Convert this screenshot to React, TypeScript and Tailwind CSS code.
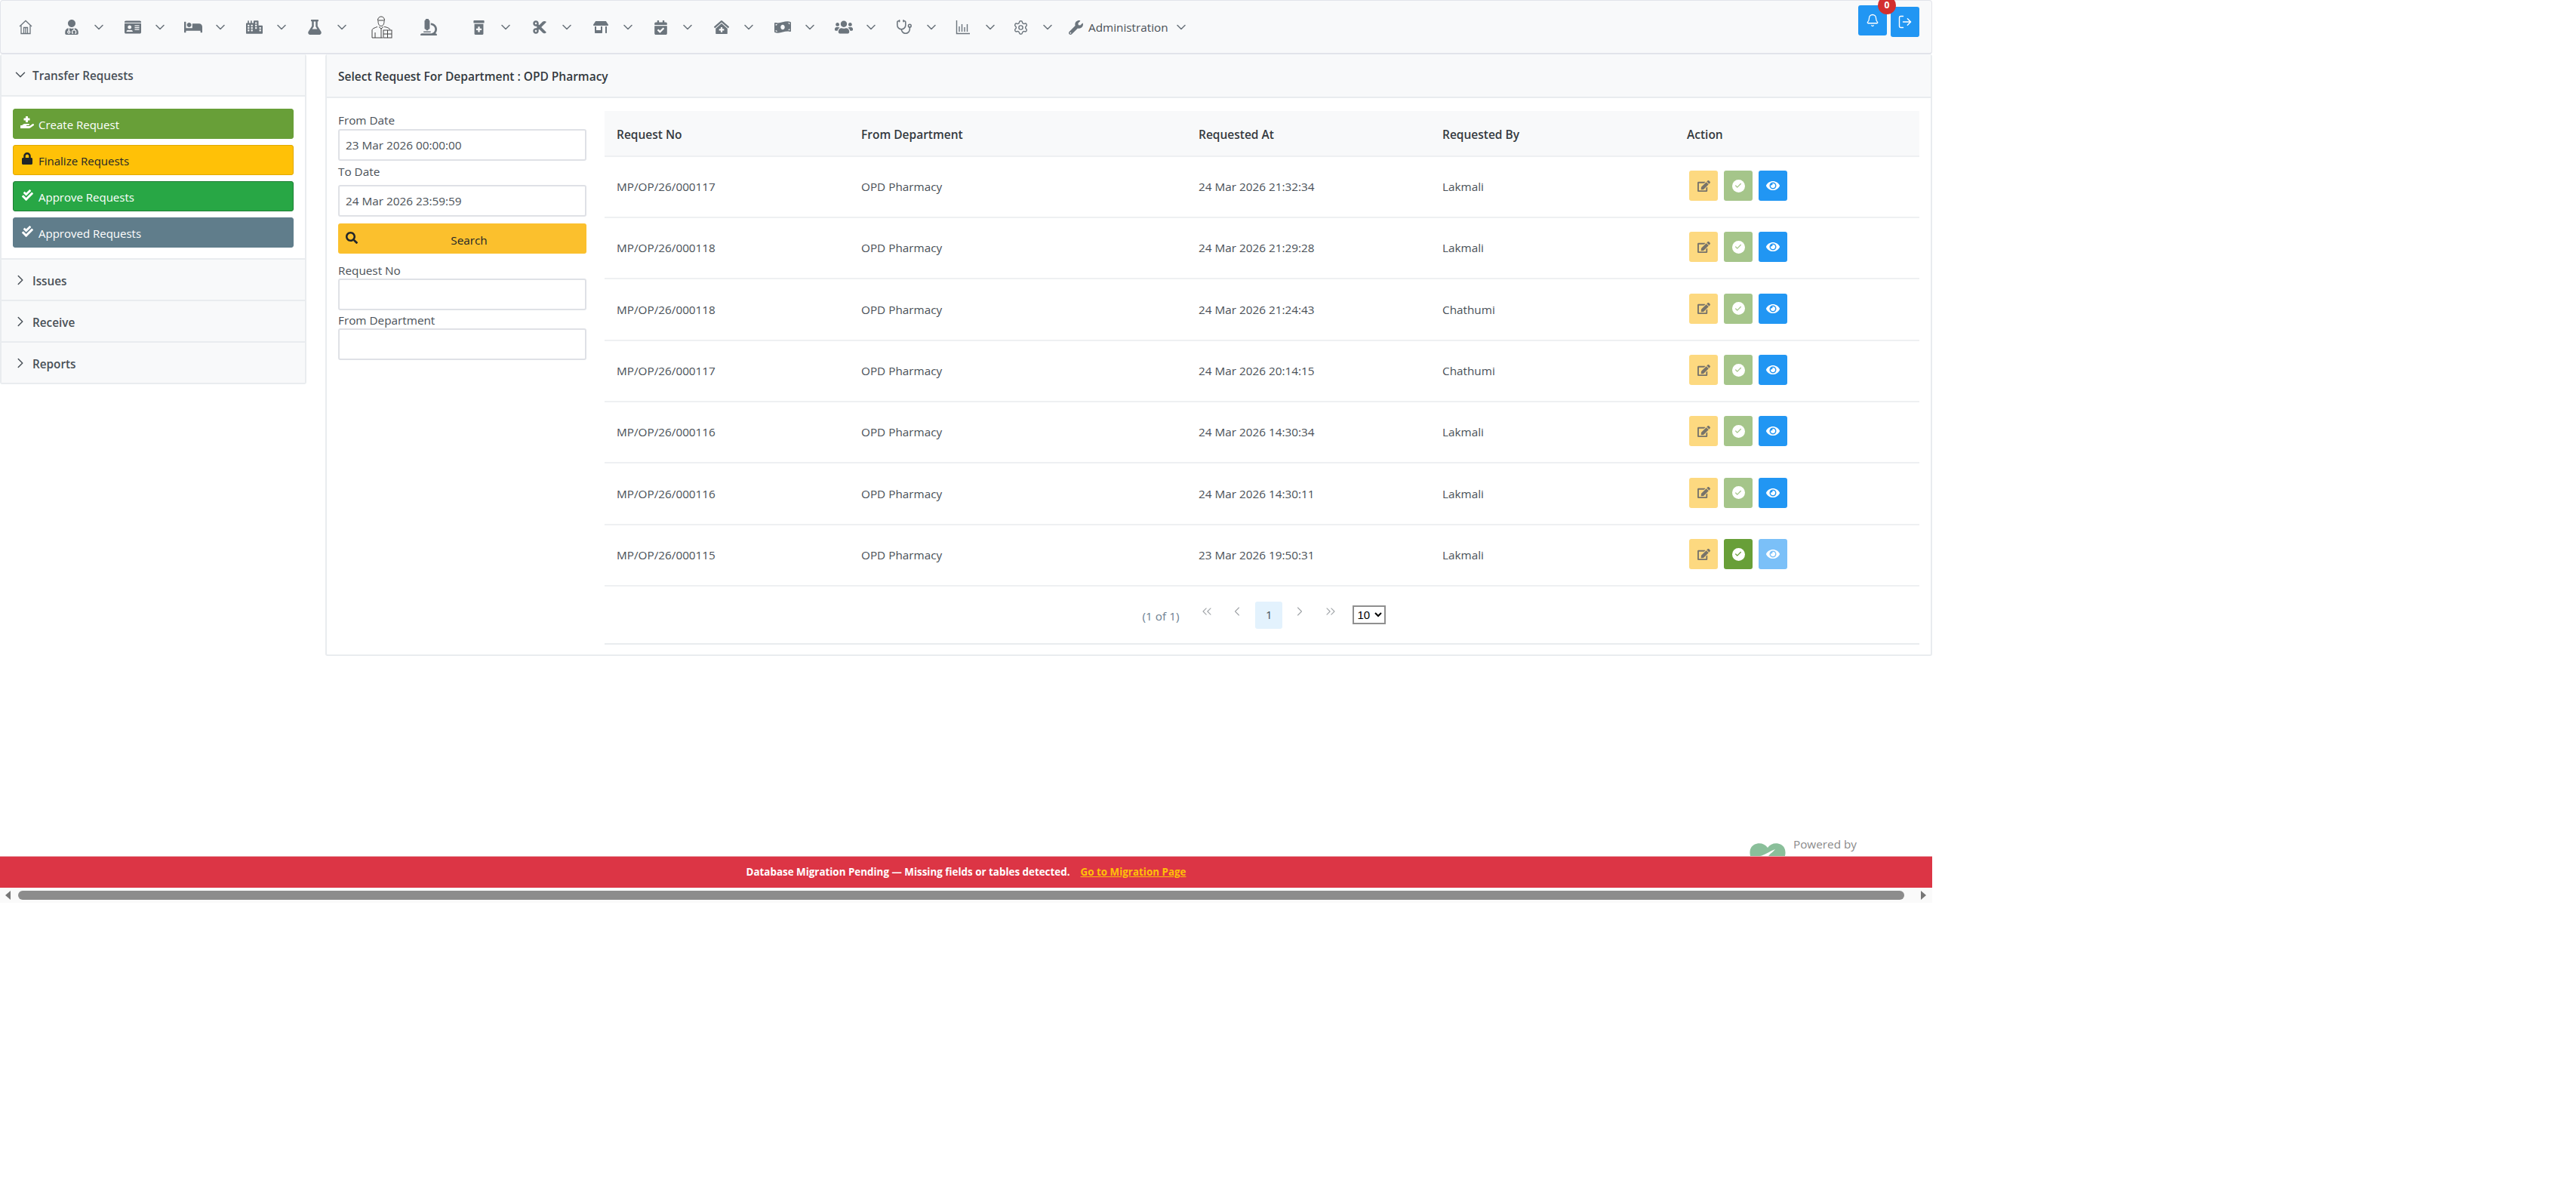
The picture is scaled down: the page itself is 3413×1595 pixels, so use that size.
import React from 'react';
import {
  FaUserMd, FaIdCard, FaBed, FaCity, FaFlask, FaMicroscope, FaPrescriptionBottleAlt, FaCut, FaStoreAlt,
  FaCalendarCheck, FaClinicMedical, FaMoneyBillWave, FaUsers, FaWrench, FaHandHoldingMedical, FaLock,
  FaCheckDouble, FaSearch, FaEdit, FaEye,
} from 'react-icons/fa';
import { ChevronDown, ChevronRight, ChevronsLeft, ChevronLeft, ChevronsRight, Stethoscope, Settings, Bell, LogOut, Check } from 'lucide-react';

const HomeIcon = () => (
  <svg width="18" height="20" viewBox="0 0 18 20" fill="none" stroke="#6c757d" strokeWidth="1.3">
    <path d="M1 9 9 1.5 17 9" />
    <path d="M3 7.5V18.5H15V7.5" />
    <path d="M6.5 18.5V10.5H11.5V18.5" />
    <path d="M9 10.5V18.5" />
  </svg>
);

const ChartIcon = () => (
  <svg width="20" height="20" viewBox="0 0 20 20" fill="none" stroke="#6c757d" strokeWidth="1.4">
    <path d="M1.5 1V18.5H19" />
    <path d="M5 16V9M8.5 16V6M12 16V10M15.500 16V6" />
  </svg>
);

const DoctorIcon = () => (
  <svg width="30" height="30" viewBox="0 0 30 30" fill="none" stroke="#444" strokeWidth="1">
    <path d="M9.5 6c0-3 2-5 4.500-5s4.500 2 4.500 5" />
    <path d="M9 6h10" />
    <path d="M10 7c0 4 1.500 6.500 4 6.500S18 11 18 7" />
    <path d="M11 14.500 14 17l3-2.500" />
    <path d="M2 29V19c0-2 3-3 7-4.500M26 18c-2-2-4-3-8-3.500" />
    <path d="M14 17v12M2 29h14" />
    <path d="M6 22v7" />
    <rect x="17" y="19" width="11" height="10" />
    <path d="M17 24h11M22.500 19v10" />
  </svg>
);

const HeartLogo = () => (
  <svg width="48" height="26" viewBox="0 0 48 26">
    <path d="M24 6C20 0 12-1 6 2-1 6-1 16 4 24l20 20 20-20c5-8 5-18-2-22-6-3-14-2-18 4Z" fill="#8abf9a" />
    <path d="M14 17c6-1 12-6 20-9-3 4-6 5-8 8-3 3-6 4-9 6Z" fill="#ffffff" />
  </svg>
);

const MenuItem = ({ icon, className }: { icon: React.ReactNode; className: string }) => (
  <div className={`flex items-center ${className}`}>
    <span className="flex w-10 justify-center">{icon}</span>
    <ChevronDown size={20} strokeWidth={1.9} color="#6c757d" className="ml-[6px]" />
  </div>
);

const SideButton = ({ icon, label, className }: { icon: React.ReactNode; label: string; className: string }) => (
  <button className={`flex h-10 w-full items-center rounded-[3px] border pl-[9px] text-left text-[15px] ${className}`}>
    <span className="-mt-1 flex w-[18px] justify-center">{icon}</span>
    <span className="ml-[6px] mt-[3px]">{label}</span>
  </button>
);

const SectionHeader = ({ label }: { label: string }) => (
  <div className="flex h-[55px] items-center border-b-2 border-[#e9ecef] bg-[#f8f9fa] pl-4 text-[#495057]">
    <ChevronRight size={22} strokeWidth={1.6} color="#495057" className="-ml-[2px]" />
    <span className="ml-[5px] pt-[4px] text-[15.3px] font-semibold">{label}</span>
  </div>
);

const Field = ({ label, value, className }: { label: string; value?: string; className: string }) => (
  <div className={className}>
    <div className="text-[15.3px] leading-[20px] text-[#495057]">{label}</div>
    <div className="mt-[1px] flex h-[42px] items-center rounded-[3px] border-2 border-[#dfe1e6] bg-white pl-2 text-[15.3px] text-[#495057]">
      {value}
    </div>
  </div>
);

const rows = [
  ['MP/OP/26/000117', '24 Mar 2026 21:32:34', 'Lakmali'],
  ['MP/OP/26/000118', '24 Mar 2026 21:29:28', 'Lakmali'],
  ['MP/OP/26/000118', '24 Mar 2026 21:24:43', 'Chathumi'],
  ['MP/OP/26/000117', '24 Mar 2026 20:14:15', 'Chathumi'],
  ['MP/OP/26/000116', '24 Mar 2026 14:30:34', 'Lakmali'],
  ['MP/OP/26/000116', '24 Mar 2026 14:30:11', 'Lakmali'],
  ['MP/OP/26/000115', '23 Mar 2026 19:50:31', 'Lakmali'],
];

const CheckBadge = ({ color }: { color: string }) => (
  <span className="flex h-[17px] w-[17px] items-center justify-center rounded-full bg-white">
    <Check size={10} strokeWidth={3} color={color} />
  </span>
);

export default function App() {
  return (
    <div className="w-[2560px] font-['Open_Sans',sans-serif]">
      <div className="flex h-[1134px] flex-col overflow-hidden">
        <header className="relative flex h-[72px] shrink-0 items-center rounded-[4px] border border-b-2 border-[#e2e4ea] bg-[#f8f9fa] pl-[13px] pt-[1px]">
          <span className="flex w-10 justify-center"><HomeIcon /></span>
          <span className="w-[21px]" />
          <MenuItem icon={<FaUserMd size={20} color="#6c757d" />} className="w-[80.500px]" />
          <MenuItem icon={<FaIdCard size={22} color="#6c757d" />} className="w-[80.500px]" />
          <MenuItem icon={<FaBed size={24} color="#6c757d" />} className="w-[80.500px]" />
          <MenuItem icon={<FaCity size={22} color="#6c757d" />} className="w-[80.500px]" />
          <MenuItem icon={<FaFlask size={20} color="#6c757d" />} className="w-[89px]" />
          <span className="flex w-10 justify-center"><DoctorIcon /></span>
          <span className="flex w-[62px] justify-center pl-[22px]"><FaMicroscope size={22} color="#6c757d" /></span>
          <span className="w-[26px]" />
          <MenuItem icon={<FaPrescriptionBottleAlt size={19} color="#6c757d" />} className="w-[81px]" />
          <MenuItem icon={<FaCut size={20} color="#6c757d" />} className="w-[81px]" />
          <MenuItem icon={<FaStoreAlt size={20} color="#6c757d" />} className="w-[79px]" />
          <MenuItem icon={<FaCalendarCheck size={19} color="#6c757d" />} className="w-[81px]" />
          <MenuItem icon={<FaClinicMedical size={20} color="#6c757d" />} className="w-[81px]" />
          <MenuItem icon={<FaMoneyBillWave size={22} color="#6c757d" />} className="w-[81px]" />
          <MenuItem icon={<FaUsers size={24} color="#6c757d" />} className="w-[80px]" />
          <MenuItem icon={<Stethoscope size={22} strokeWidth={1.7} color="#6c757d" />} className="w-[78px]" />
          <MenuItem icon={<ChartIcon />} className="w-[76px]" />
          <MenuItem icon={<Settings size={21} strokeWidth={1.6} color="#6c757d" />} className="w-[84px]" />
          <FaWrench size={19} color="#6c757d" />
          <span className="ml-[7px] text-[15.3px] text-[#495057]">Administration</span>
          <ChevronDown size={20} strokeWidth={1.9} color="#6c757d" className="ml-[7px]" />

          <div className="absolute right-[16px] top-[8px] flex items-start gap-[5px]">
            <button className="relative mt-[-2px] flex h-10 w-[38px] items-center justify-center rounded-[3px] bg-[#2196f3]">
              <Bell size={18} strokeWidth={1.7} color="#ffffff" />
              <span className="absolute -right-3 -top-3 flex h-6 w-6 items-center justify-center rounded-full bg-[#d32f2f] text-[12px] font-bold text-white">0</span>
            </button>
            <button className="flex h-10 w-[38px] items-center justify-center rounded-[3px] bg-[#2196f3]">
              <LogOut size={20} strokeWidth={1.7} color="#ffffff" />
            </button>
          </div>
        </header>

        <div className="flex items-start gap-[25px]">
          <aside className="w-[406px] shrink-0 rounded-[3px] border-x-2 border-[#e9ecef]">
            <div className="flex h-[56px] items-center border-b-2 border-[#e9ecef] bg-[#f8f9fa] pl-4 text-[#495057]">
              <ChevronDown size={22} strokeWidth={1.6} color="#495057" className="-ml-[2px]" />
              <span className="ml-[5px] pt-[3px] text-[15.3px] font-semibold">Transfer Requests</span>
            </div>
            <div className="flex h-[216px] flex-col gap-2 border-b-2 border-[#e9ecef] bg-white px-[15px] pt-4">
              <SideButton icon={<FaHandHoldingMedical size={18} />} label="Create Request" className="border-[#689f38] bg-[#689f38] text-white" />
              <SideButton icon={<FaLock size={16} />} label="Finalize Requests" className="border-[#e0a800] bg-[#ffc107] text-[#212529]" />
              <SideButton icon={<FaCheckDouble size={15} />} label="Approve Requests" className="border-[#1e7e34] bg-[#28a745] text-white" />
              <SideButton icon={<FaCheckDouble size={15} />} label="Approved Requests" className="border-[#607d8b] bg-[#607d8b] text-white" />
            </div>
            <SectionHeader label="Issues" />
            <SectionHeader label="Receive" />
            <SectionHeader label="Reports" />
          </aside>

          <main className="h-[797px] min-w-0 flex-1 rounded-[3px] border-x-2 border-b-2 border-[#e9ecef] bg-white">
            <div className="flex h-[58px] items-center border-b-2 border-[#e9ecef] bg-[#f8f9fa] pl-[15px] pt-[4px] text-[15.500px] font-semibold text-[#343a40]">
              Select Request For Department : OPD Pharmacy
            </div>
            <div className="flex gap-[24px] pl-[15px] pr-[15px] pt-[17px]">
              <div className="w-[329px] shrink-0">
                <Field label="From Date" value="23 Mar 2026 00:00:00" className="mt-[3px] [&>div:first-child]:-mt-[1px] [&>div:last-child]:mt-[2px]" />
                <Field label="To Date" value="24 Mar 2026 23:59:59" className="mt-[4px] [&>div:last-child]:mt-[8px]" />
                <button className="relative mt-[9px] flex h-10 w-full items-center justify-center rounded-[3px] bg-[#fbc02d] pl-[18px] text-[15.3px] text-[#212529]">
                  <FaSearch size={16} className="absolute left-[10px] top-[11px]" />
                  <span className="mt-[4px]">Search</span>
                </button>
                <Field label="Request No" className="mt-[12px]" />
                <Field label="From Department" className="mt-[3px]" />
              </div>
              <div className="min-w-0 flex-1">
                <table className="w-[1742px] table-fixed border-collapse text-left text-[15.3px] text-[#495057]">
                  <colgroup>
                    <col className="w-[325px]" />
                    <col className="w-[444px]" />
                    <col className="w-[323px]" />
                    <col className="w-[325px]" />
                    <col className="w-[325px]" />
                  </colgroup>
                  <thead>
                    <tr className="h-[60px] border-b-2 border-[#eef0f2] bg-[#f8f9fa] text-[#343a40]">
                      <th className="pl-4 pt-[4px] text-[15.500px] font-semibold">Request No</th>
                      <th className="pl-[15px] pt-[4px] text-[15.500px] font-semibold">From Department</th>
                      <th className="pl-[18px] pt-[4px] text-[15.500px] font-semibold">Requested At</th>
                      <th className="pl-[18px] pt-[4px] text-[15.500px] font-semibold">Requested By</th>
                      <th className="pl-[17px] pt-[4px] text-[15.500px] font-semibold">Action</th>
                    </tr>
                  </thead>
                  <tbody>
                    {rows.map((r, i) => {
                      const last = i === rows.length - 1;
                      return (
                        <tr key={i} className={`border-b-2 border-[#eef0f2] ${i % 3 === 2 ? 'h-[82px]' : 'h-[81px]'}`}>
                          <td className="pl-4">{r[0]}</td>
                          <td className="pl-[15px]">OPD Pharmacy</td>
                          <td className="pl-[18px]">{r[1]}</td>
                          <td className="pl-[18px]">{r[2]}</td>
                          <td className="pl-[20px]">
                            <div className="-mt-[3px] flex gap-2">
                              <button className="flex h-10 w-[38px] items-center justify-center rounded-[3px] bg-[#fdd980] text-[#77736a]">
                                <FaEdit size={17} />
                              </button>
                              {last ? (
                                <button className="flex h-10 w-[38px] items-center justify-center rounded-[3px] bg-[#689f38]">
                                  <CheckBadge color="#689f38" />
                                </button>
                              ) : (
                                <button className="flex h-10 w-[38px] items-center justify-center rounded-[3px] bg-[#a5c58a]">
                                  <CheckBadge color="#a5c58a" />
                                </button>
                              )}
                              <button className={`flex h-10 w-[38px] items-center justify-center rounded-[3px] text-white ${last ? 'bg-[#7bc0f8]' : 'bg-[#2196f3]'}`}>
                                <FaEye size={18} />
                              </button>
                            </div>
                          </td>
                        </tr>
                      );
                    })}
                  </tbody>
                </table>
                <div className="flex h-[77px] w-[1742px] items-center justify-center border-b-2 border-[#e9ecef] pl-[6px] text-[15.3px] text-[#6c7f92]">
                  <span className="mt-[4px]">(1 of 1)</span>
                  <ChevronsLeft size={20} strokeWidth={1.3} color="#a0a4a8" className="ml-[27px] -mt-[10px]" />
                  <ChevronLeft size={20} strokeWidth={1.3} color="#a0a4a8" className="ml-[20px] -mt-[10px]" />
                  <span className="ml-[14px] flex h-9 w-9 items-center justify-center rounded-[3px] bg-[#e3f2fd] text-[#495057]">1</span>
                  <ChevronRight size={20} strokeWidth={1.3} color="#a0a4a8" className="ml-[13px] -mt-[10px]" />
                  <ChevronsRight size={20} strokeWidth={1.3} color="#a0a4a8" className="ml-[21px] -mt-[10px]" />
                  <select defaultValue="10" className="ml-[19px] h-[25px] w-[44px] rounded-none border-2 border-[#8f8f8f] bg-white font-['Liberation_Sans',sans-serif] text-[15px] text-black">
                    <option>10</option>
                  </select>
                </div>
              </div>
            </div>
          </main>
        </div>

        <div className="mt-auto flex h-[30px] shrink-0 justify-end overflow-hidden pr-[100px]">
          <div className="mt-[13px]"><HeartLogo /></div>
          <span className="ml-[10px] mt-[4px] text-[15.3px] leading-[20px] text-[#8a8a8a]">Powered by</span>
        </div>
      </div>

      <div className="flex h-[42px] items-center justify-center border-t border-[#eba8ae] bg-[#dc3545] text-[13.400px] font-bold text-white">
        <span>Database Migration Pending — Missing fields or tables detected.</span>
        <a className="ml-[14px] text-[#ffc107] underline">Go to Migration Page</a>
      </div>

      <div className="flex h-[20px] items-center bg-[#fafafa]">
        <span className="ml-[7px] h-0 w-0 border-y-[6px] border-r-[7px] border-y-transparent border-r-[#777]" />
        <span className="ml-[10px] h-3 w-[2499px] rounded-full bg-[#8c8c8c]" />
        <span className="ml-[22px] h-0 w-0 border-y-[6px] border-l-[7px] border-y-transparent border-l-[#777]" />
      </div>
    </div>
  );
}
